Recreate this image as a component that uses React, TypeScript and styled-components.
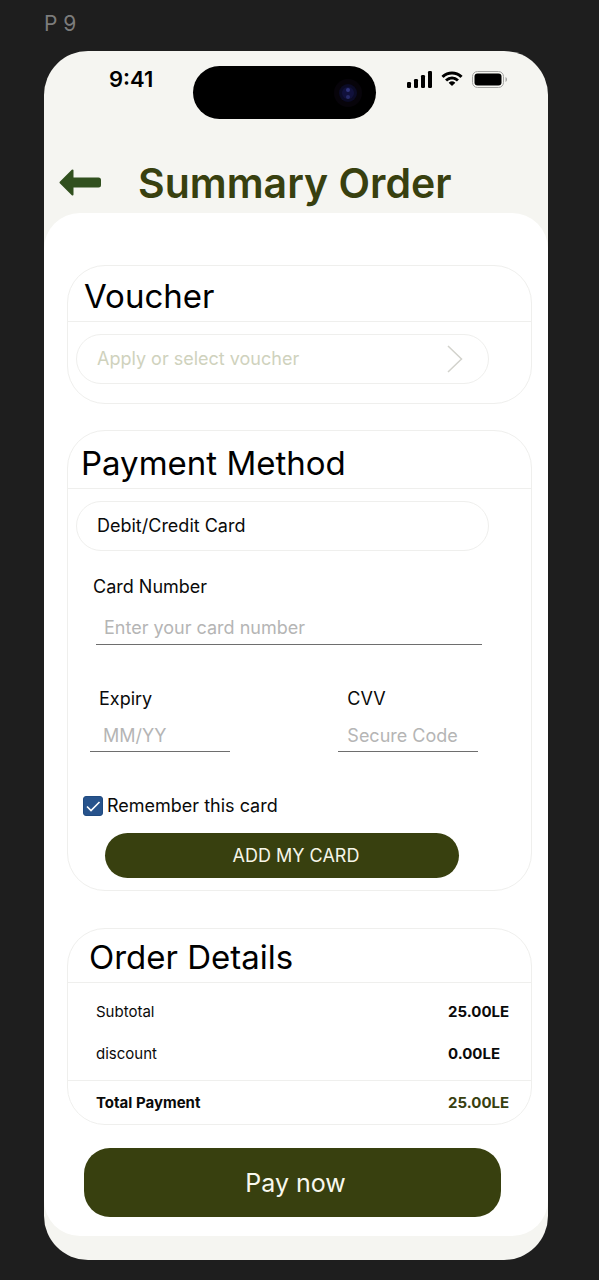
import React from "react";
import styled, { createGlobalStyle } from "styled-components";

const olive = "#38400f";
const line = "#efefed";

const GlobalStyle = createGlobalStyle`
  *, *::before, *::after { box-sizing: border-box; }
  body {
    margin: 0;
    background: #1e1e1e;
    color: #0a0a0a;
    font-family: Inter, "Liberation Sans", sans-serif;
    font-size: 18px;
    line-height: 24px;
  }
  h1, h2, dl, dd { margin: 0; }
  button, input { font: inherit; color: inherit; }
  button { cursor: pointer; }
`;

const Page = styled.div`
  padding: 14px 51px 20px 44px;
`;

const FrameLabel = styled.div`
  height: 37px;
  color: #7c7c7c;
  font-size: 21px;
  line-height: 20px;
`;

const Phone = styled.main`
  background: #f5f5f1;
  border-radius: 44px;
  padding-bottom: 24px;
  overflow: hidden;
`;

const StatusBar = styled.div`
  display: grid;
  grid-template-columns: 149fr 183px 172fr;
  align-items: start;
  padding-top: 15px;
`;

const Time = styled.time`
  padding-left: 65px;
  color: #000;
  font-size: 22px;
  font-weight: 600;
  line-height: 26px;
`;

const Island = styled.div`
  display: flex;
  align-items: center;
  justify-content: flex-end;
  height: 53px;
  padding-right: 12px;
  border-radius: 27px;
  background: #000;
`;

const StatusIcons = styled.div`
  display: flex;
  align-items: center;
  gap: 9px;
  height: 26px;
  padding-left: 31px;
`;

const Header = styled.header`
  display: flex;
  align-items: center;
  gap: 36px;
  padding: 40px 16px 6px 15px;
`;

const BackButton = styled.button`
  display: flex;
  padding: 0;
  border: 0;
  background: none;
`;

const PageTitle = styled.h1`
  color: ${olive};
  font-size: 41px;
  font-weight: 600;
  line-height: 48px;
`;

const Sheet = styled.div`
  padding: 52px 16px 19px 23px;
  border-radius: 36px;
  background: #fff;
`;

const Card = styled.section<{ $gap: number }>`
  margin-bottom: ${(p) => p.$gap}px;
  border: 1px solid ${line};
  border-radius: 38px;
`;

const CardTitle = styled.h2<{ $inset: number; $top: number }>`
  padding: ${(p) => p.$top}px 0 5px ${(p) => p.$inset}px;
  border-bottom: 1px solid ${line};
  color: #000;
  font-size: 33px;
  font-weight: 400;
  line-height: 40px;
`;

const Pill = styled.button<{ $muted?: boolean }>`
  display: flex;
  align-items: center;
  justify-content: space-between;
  width: calc(100% - 50px);
  height: 50px;
  margin: 12px 0 0 8px;
  padding: 0 25px 0 20px;
  border: 1px solid ${line};
  border-radius: 25px;
  background: none;
  color: ${(p) => (p.$muted ? "#cfd2bd" : "#0a0a0a")};
`;

const VoucherBody = styled.div`
  padding-bottom: 19px;
`;

const CardForm = styled.form`
  padding: 24px 49px 12px 15px;
`;

const Field = styled.div`
  display: flex;
  flex-direction: column;
`;

const NumberField = styled(Field)`
  gap: 13px;
  padding-left: 10px;
`;

const NumberInputRow = styled.div`
  padding-left: 3px;
`;

const Label = styled.label<{ $inset?: number }>`
  padding-left: ${(p) => p.$inset ?? 0}px;
`;

const TextInput = styled.input<{ $inset: number }>`
  display: block;
  width: 100%;
  height: 33px;
  padding: 0 0 2px ${(p) => p.$inset}px;
  border: 0;
  border-bottom: 1px solid #6e6e6e;
  border-radius: 0;
  background: none;
  outline: none;
  &::placeholder { color: #b5b5b5; opacity: 1; }
`;

const FieldPair = styled.div`
  display: flex;
  justify-content: space-between;
  margin: 42px 4px 0 7px;
  ${Field} { width: 36%; gap: 8px; }
  ${TextInput} { padding-bottom: 0; }
`;

const Remember = styled.label`
  display: flex;
  align-items: center;
  gap: 4px;
  margin: 42px 0 15px;
`;

const CheckWrap = styled.span`
  display: grid;
  place-items: center;
  > * { grid-area: 1 / 1; }
  svg { pointer-events: none; }
`;

const Checkbox = styled.input`
  appearance: none;
  width: 20px;
  height: 20px;
  margin: 0;
  border: 1px solid #1f4a80;
  border-radius: 3px;
  &:checked { background: #27538c; }
`;

const AddButton = styled.button`
  display: block;
  width: calc(100% - 45px);
  height: 45px;
  margin-left: 22px;
  padding: 0 0 0 28px;
  border: 0;
  border-radius: 23px;
  background: ${olive};
  color: #f5f5e8;
`;

const Totals = styled.dl`
  font-size: 15px;
`;

const Lines = styled.div`
  padding: 8px 0 5px;
`;

const TotalLine = styled.div`
  border-top: 1px solid ${line};
`;

const Row = styled.div<{ $total?: boolean }>`
  display: grid;
  grid-template-columns: 1fr 83px;
  align-items: center;
  height: ${(p) => (p.$total ? 43 : 42)}px;
  padding-left: 28px;
  font-weight: ${(p) => (p.$total ? 700 : 400)};
  dd { font-weight: 700; color: ${(p) => (p.$total ? olive : "#0a0a0a")}; }
`;

const PayButton = styled.button`
  display: block;
  width: calc(100% - 48px);
  height: 69px;
  margin-left: 17px;
  padding: 0 0 0 6px;
  border: 0;
  border-radius: 26px;
  background: ${olive};
  color: #f8f8ee;
  font-size: 25px;
`;

const Camera = () => (
  <svg width="32" height="32" viewBox="0 0 32 32" aria-hidden="true">
    <circle cx="16" cy="16" r="14" fill="#07040a" />
    <circle cx="16" cy="16" r="9" fill="#0b0b26" />
    <circle cx="16" cy="16" r="6" fill="#11113c" />
    <circle cx="16" cy="13" r="2" fill="#30347c" />
    <circle cx="16" cy="20" r="2" fill="#272b68" />
  </svg>
);

const Signal = () => (
  <svg width="25" height="17" viewBox="0 0 25 17" aria-hidden="true">
    <rect x="0" y="11" width="4" height="6" rx="1.2" />
    <rect x="7" y="8" width="4" height="9" rx="1.2" />
    <rect x="14" y="4" width="4" height="13" rx="1.2" />
    <rect x="21" y="0" width="4" height="17" rx="1.2" />
  </svg>
);

const Wifi = () => (
  <svg width="22" height="16" viewBox="0 0 17 12" aria-hidden="true">
    <path d="M8.5 2.5c2.4 0 4.6.9 6.3 2.5.1.1.3.1.4 0l1.2-1.2c.2-.2.2-.4 0-.5C12-.9 5-.9.6 3.3c-.1.1-.1.3 0 .5L1.8 5c.1.1.3.1.4 0 1.7-1.6 3.900-2.500 6.300-2.500Z" />
    <path d="M8.500 6.400c1.300 0 2.500.5 3.500 1.400.1.1.3.1.5 0l1.200-1.200c.1-.2.1-.4 0-.5a7.600 7.600 0 0 0-10.400 0c-.1.1-.1.3 0 .5l1.200 1.200c.2.1.4.1.5 0 1-.9 2.200-1.400 3.500-1.400Z" />
    <path d="M10.900 9.100c.1-.1.1-.3 0-.4a3.700 3.700 0 0 0-4.800 0c-.1.1-.1.3 0 .4l2.200 2.200c.1.1.3.1.4 0Z" />
  </svg>
);

const Battery = () => (
  <svg width="36" height="17" viewBox="0 0 36 17" aria-hidden="true">
    <rect x="0.5" y="0.5" width="31" height="16" rx="5" fill="none" stroke="#a5a5a3" />
    <rect x="2.5" y="2.5" width="27" height="12" rx="3" />
    <path d="M33.5 6v5c2-.8 2-4.2 0-5Z" fill="#a5a5a3" />
  </svg>
);

const BackArrow = () => (
  <svg width="43" height="28" viewBox="0 0 43 28" aria-hidden="true">
    <path
      d="M1.500 13.500 13.500 1.500V9.500h26q1.500 0 1.500 1.500v5q0 1.500-1.500 1.500h-26v8Z"
      fill="#31501f"
      stroke="#31501f"
      strokeWidth="2"
      strokeLinejoin="round"
    />
  </svg>
);

const Chevron = () => (
  <svg width="16" height="28" viewBox="0 0 16 28" fill="none" stroke="#d2d2cc" strokeWidth="1.5" aria-hidden="true">
    <path d="M1 1 14.5 14 1 27" />
  </svg>
);

const Tick = () => (
  <svg width="20" height="20" viewBox="0 0 20 20" fill="none" stroke="#fff" strokeWidth="1.6" aria-hidden="true">
    <path d="M4 10.5 8 14.5 16.500 6" />
  </svg>
);

export default function App() {
  return (
    <>
      <GlobalStyle />
      <Page>
        <FrameLabel>P 9</FrameLabel>
        <Phone>
          <StatusBar>
            <Time>9:41</Time>
            <Island>
              <Camera />
            </Island>
            <StatusIcons>
              <Signal />
              <Wifi />
              <Battery />
            </StatusIcons>
          </StatusBar>
          <Header>
            <BackButton type="button" aria-label="Back">
              <BackArrow />
            </BackButton>
            <PageTitle>Summary Order</PageTitle>
          </Header>
          <Sheet>
            <Card $gap={26}>
              <CardTitle $inset={16} $top={10}>Voucher</CardTitle>
              <VoucherBody>
                <Pill type="button" $muted>
                  Apply or select voucher
                  <Chevron />
                </Pill>
              </VoucherBody>
            </Card>

            <Card $gap={37}>
              <CardTitle $inset={13} $top={12}>Payment Method</CardTitle>
              <Pill type="button">Debit/Credit Card</Pill>
              <CardForm onSubmit={(e) => e.preventDefault()}>
                <NumberField>
                  <Label htmlFor="number">Card Number</Label>
                  <NumberInputRow>
                    <TextInput id="number" $inset={8} placeholder="Enter your card number" />
                  </NumberInputRow>
                </NumberField>
                <FieldPair>
                  <Field>
                    <Label htmlFor="expiry" $inset={9}>Expiry</Label>
                    <TextInput id="expiry" $inset={13} placeholder="MM/YY" />
                  </Field>
                  <Field>
                    <Label htmlFor="cvv" $inset={9}>CVV</Label>
                    <TextInput id="cvv" $inset={9} placeholder="Secure Code" />
                  </Field>
                </FieldPair>
                <Remember>
                  <CheckWrap>
                    <Checkbox type="checkbox" defaultChecked />
                    <Tick />
                  </CheckWrap>
                  Remember this card
                </Remember>
                <AddButton type="submit">ADD MY CARD</AddButton>
              </CardForm>
            </Card>

            <Card $gap={23}>
              <CardTitle $inset={21} $top={8}>Order Details</CardTitle>
              <Totals>
                <Lines>
                  <Row>
                    <dt>Subtotal</dt>
                    <dd>25.00LE</dd>
                  </Row>
                  <Row>
                    <dt>discount</dt>
                    <dd>0.00LE</dd>
                  </Row>
                </Lines>
                <TotalLine>
                  <Row $total>
                    <dt>Total Payment</dt>
                    <dd>25.00LE</dd>
                  </Row>
                </TotalLine>
              </Totals>
            </Card>

            <PayButton type="button">Pay now</PayButton>
          </Sheet>
        </Phone>
      </Page>
    </>
  );
}
